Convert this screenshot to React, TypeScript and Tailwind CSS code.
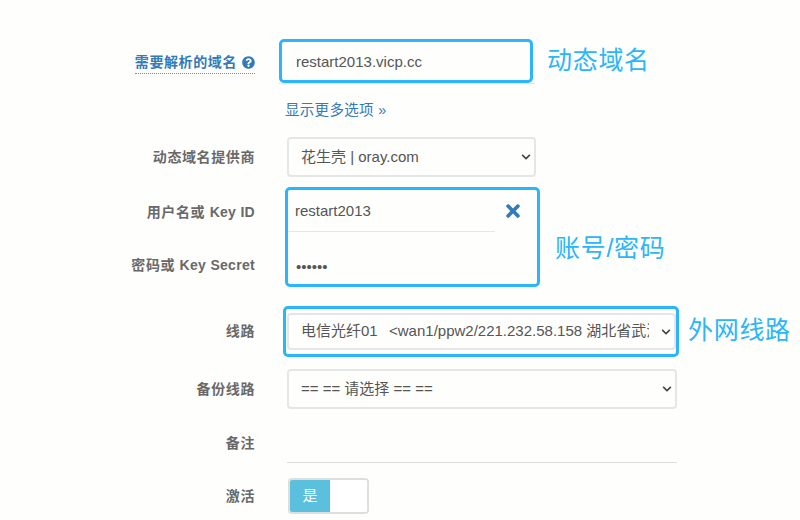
// App.tsx
import React from 'react';
import { FaQuestionCircle, FaTimes, FaChevronDown } from 'react-icons/fa';

const font = "font-['Liberation_Sans','Noto_Sans_CJK_SC',sans-serif]";

const Label = ({ children }: { children: React.ReactNode }) => (
  <div className="w-[255px] shrink-0 text-right text-[14px] font-bold tracking-[0.6px] text-[#696969]">{children}</div>
);

const Note = ({ children }: { children: React.ReactNode }) => (
  <span className="text-[25px] leading-none tracking-[0.7px] text-[#2bb5fb]">{children}</span>
);

const Select = ({ value, className }: { value: string; className: string }) => (
  <div className={`relative ${className}`}>
    <select
      defaultValue={value}
      className="h-full w-full appearance-none rounded-[4px] border-2 border-[#e6e6e6] bg-[#fefefc] pr-[25px] pl-[12px] text-[15px] text-[#555] outline-none"
    >
      <option>{value}</option>
    </select>
    <FaChevronDown className="pointer-events-none absolute top-1/2 right-[5px] -translate-y-1/2 text-[10px] text-[#444]" />
  </div>
);

export default function App() {
  return (
    <div className={`h-[520px] w-[800px] overflow-hidden bg-[#fefefc] pt-[39px] ${font}`}>
      <div className="flex items-center">
        <Label>
          <span className="inline-flex items-center gap-[5px] border-b border-dotted border-[#888] pt-[2px] text-[#337ab7]">
            需要解析的域名 <FaQuestionCircle className="text-[13px]" />
          </span>
        </Label>
        <div className="ml-[24px] w-[256px] border-b border-[#e6e6e6]">
          <div className="flex h-[44px] w-[254px] items-center rounded-[5px] border-[3px] border-[#2bb5fb] pt-[2px] pl-[14px] text-[15px] text-[#555]">
            restart2013.vicp.cc
          </div>
        </div>
        <div className="ml-[12px]">
          <Note>动态域名</Note>
        </div>
      </div>

      <div className="mt-[17px] ml-[285px] text-[14.5px] leading-[18px] tracking-[0.3px] text-[#337ab7]">显示更多选项 »</div>

      <div className="mt-[18px] flex items-center">
        <Label>动态域名提供商</Label>
        <Select value="花生壳 | oray.com" className="ml-[32px] h-[40px] w-[249px]" />
      </div>

      <div className="mt-[10px] flex items-start">
        <div className="flex flex-col">
          <div className="flex h-[50px] items-center">
            <Label>用户名或 <span className="tracking-[0.3px]">Key ID</span></Label>
          </div>
          <div className="mt-[6px] flex h-[44px] items-center">
            <Label>密码或 <span className="tracking-[0.3px]">Key Secret</span></Label>
          </div>
        </div>
        <div className="ml-[30px] flex h-[100px] w-[255px] flex-col rounded-[5px] border-[3px] border-[#2bb5fb] text-[15px] text-[#555]">
          <div className="flex h-[42px] w-full items-center">
            <div className="flex h-full w-[207px] items-center border-b border-[#e6e6e6] pt-[2px] pl-[7px]">restart2013</div>
            <FaTimes className="ml-[8px] text-[20px] text-[#337ab7]" />
          </div>
          <div className="flex flex-1 items-center pt-[18px] pl-[8px] text-[15px]">••••••</div>
        </div>
        <div className="mt-[49px] ml-[15px]">
          <Note>账号/密码</Note>
        </div>
      </div>

      <div className="mt-[19px] flex items-center">
        <Label>线路</Label>
        <div className="ml-[28px] h-[51px] w-[396px] rounded-[5px] border-[3px] border-[#2bb5fb] py-[4px] pl-[1px]">
          <Select value={'电信光纤01\u00a0\u00a0\u2009<wan1/ppw2/221.232.58.158 湖北省武汉市 电信>'} className="h-full w-full" />
        </div>
        <div className="ml-[9px]">
          <Note>外网线路</Note>
        </div>
      </div>

      <div className="mt-[12px] flex items-center">
        <Label>备份线路</Label>
        <Select value="== == 请选择 == ==" className="ml-[32px] h-[40px] w-[390px]" />
      </div>

      <div className="mt-[24px] flex items-center">
        <Label>备注</Label>
      </div>
      <div className="mt-[8px] ml-[287px] w-[390px] border-t border-[#dcdcdc]"></div>

      <div className="mt-[15px] flex items-center">
        <Label>激活</Label>
        <div className="ml-[33px] flex h-[36px] w-[81px] overflow-hidden rounded-[4px] border-2 border-[#dedede]">
          <div className="flex w-[40px] items-center justify-center bg-[#5bc0de] text-[15px] text-white">是</div>
          <div className="flex-1 bg-white"></div>
        </div>
      </div>
    </div>
  );
}
